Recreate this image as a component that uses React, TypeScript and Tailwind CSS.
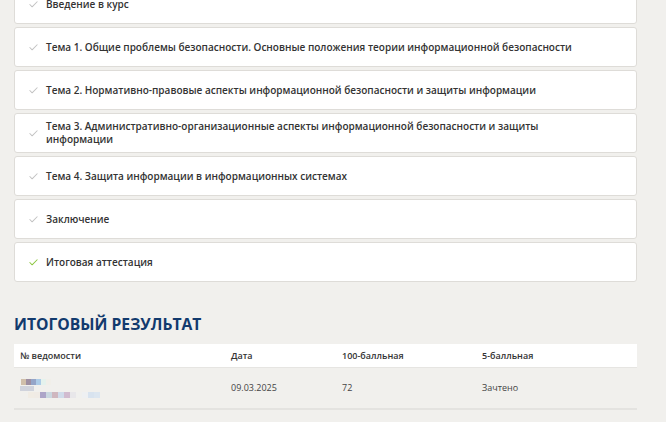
import { Check } from "lucide-react";

const topics = [
	{ title: "Введение в курс", done: false },
	{
		title:
			"Тема 1. Общие проблемы безопасности. Основные положения теории информационной безопасности",
		done: false,
	},
	{
		title:
			"Тема 2. Нормативно-правовые аспекты информационной безопасности и защиты информации",
		done: false,
	},
	{
		title:
			"Тема 3. Административно-организационные аспекты информационной безопасности и защиты информации",
		done: false,
	},
	{ title: "Тема 4. Защита информации в информационных системах", done: false },
	{ title: "Заключение", done: false },
	{ title: "Итоговая аттестация", done: true },
];

// blurred-out document number, drawn as a row of soft blocks
const blurTop = ["#c9b49a", "#8a7890", "#7f93c0", "#9cc3e6", "#e3f3ee", "#f1efe9"];
const blurBottom = [
	"#f2ece2",
	"#f0ebe4",
	"#9d93c0",
	"#c1d2dd",
	"#c7aab4",
	"#c9d6ea",
	"#caaec8",
	"#e6e6ea",
	"#f0f0ef",
	"#eef1f4",
	"#d2e1f0",
	"#d7e4f1",
];

export default function App() {
	return (
		<div
			className="h-[422px] w-[666px] overflow-hidden bg-[#f1f0ed] text-[#333]"
			style={{ fontFamily: "'Open Sans', 'Noto Sans', sans-serif" }}
		>
			<div className="-mt-[16px] flex w-[624px] flex-col gap-[3px] pl-[14px]">
				{topics.map((t) => (
					<div
						key={t.title}
						className="flex min-h-[40px] w-[623px] items-center rounded-[3px] border border-[#dedcd8] bg-white pl-[13px] pr-[55px]"
					>
						<Check
							className={`mr-[7px] h-[11px] w-[11px] shrink-0 ${t.done ? "text-[#8cc63f]" : "text-[#c2c2c2]"}`}
							strokeWidth={2.2}
						/>
						<span className="text-[10px] font-semibold leading-[13px]">
							{t.title}
						</span>
					</div>
				))}
			</div>

			<h2 className="mt-[32px] pl-[14px] text-[15.7px] font-bold uppercase leading-[20px] text-[#123a6d]">
				Итоговый результат
			</h2>

			<div className="ml-[14px] mt-[10px] w-[623px] text-[9px]">
				<div className="grid h-[24px] grid-cols-[211px_111px_140px_1fr] items-center border-b border-[#e6e5e2] bg-white pl-[6px] font-semibold">
					<div>№ ведомости</div>
					<div>Дата</div>
					<div>100-балльная</div>
					<div>5-балльная</div>
				</div>
				<div className="grid h-[42px] grid-cols-[211px_111px_140px_1fr] items-center border-b-2 border-[#e4e3e0] pl-[6px] text-[#444]">
					<div className="flex flex-col gap-[1px] opacity-80">
						<div className="flex pl-[1px]">
							{blurTop.map((c, i) => (
								<div
									key={i}
									className="h-[6px] w-[5px]"
									style={{ backgroundColor: c }}
								/>
							))}
						</div>
						<div className="flex">
							<div className="h-[5px] w-[14px] bg-[#c8ccd8]" />
						</div>
						<div className="flex pl-[8px]">
							{blurBottom.map((c, i) => (
								<div
									key={i}
									className="h-[6px] w-[6px]"
									style={{ backgroundColor: c }}
								/>
							))}
						</div>
					</div>
					<div>09.03.2025</div>
					<div>72</div>
					<div>Зачтено</div>
				</div>
			</div>
		</div>
	);
}
